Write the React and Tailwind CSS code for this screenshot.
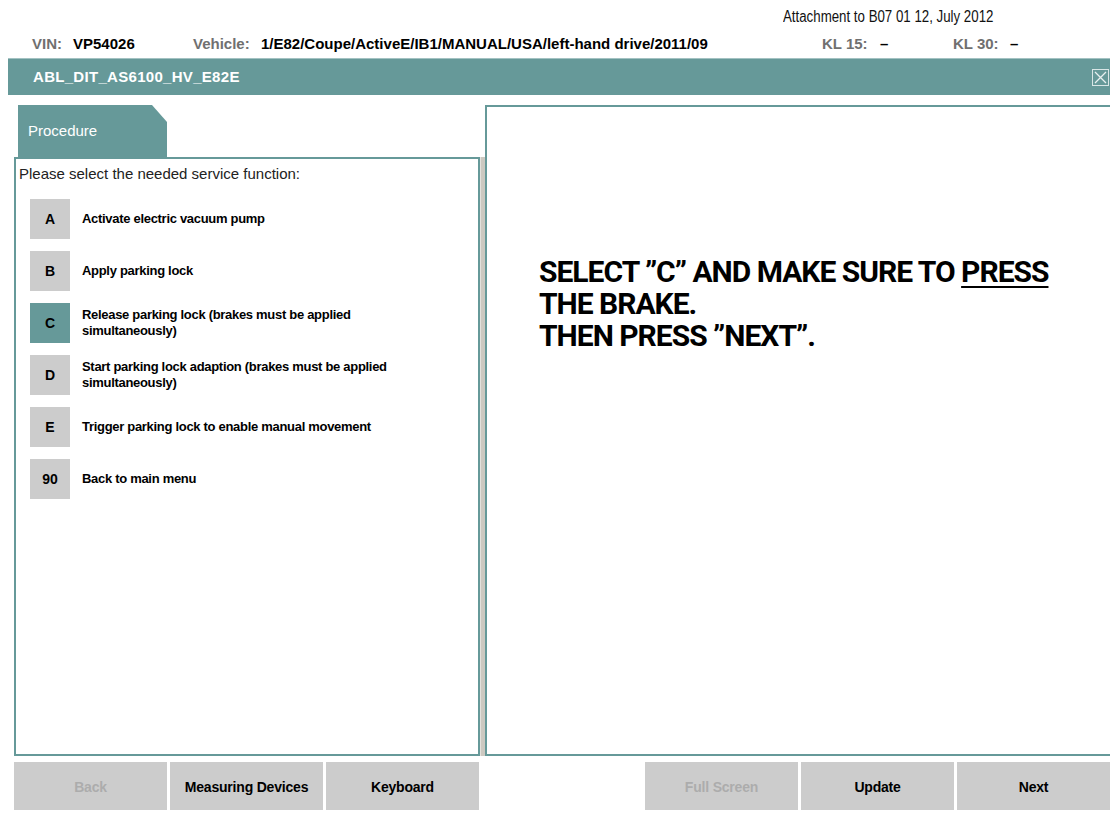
import React from 'react';

const items = [
    { key: 'A', label: 'Activate electric vacuum pump' },
    { key: 'B', label: 'Apply parking lock' },
    { key: 'C', label: 'Release parking lock (brakes must be applied simultaneously)', active: true },
    { key: 'D', label: 'Start parking lock adaption (brakes must be applied simultaneously)' },
    { key: 'E', label: 'Trigger parking lock to enable manual movement' },
    { key: '90', label: 'Back to main menu' },
];

const FooterButton = ({ children, disabled }) => (
    <button
        className={`h-[48px] w-[153px] pt-[3px] bg-[#cccccc] text-[14px] font-bold tracking-[-0.2px] ${disabled ? 'text-[#acacac]' : 'text-black'}`}
    >
        {children}
    </button>
);

const App = () => {
    return (
        <div className="w-[1119px] h-[820px] bg-white font-['Liberation_Sans',Arial,sans-serif] text-black overflow-hidden">
            {/* attachment note */}
            <div className="h-[30px] pl-[783px] pt-[5px]">
                <span className="inline-block origin-left scale-x-[0.83] whitespace-nowrap text-[16px] leading-[20px] text-[#111111]">
                    Attachment to B07 01 12, July 2012
                </span>
            </div>

            {/* vehicle info */}
            <div className="h-[28px] pl-[32px] flex items-center text-[15px] font-bold whitespace-nowrap">
                <span className="w-[41px] text-[#707070]">VIN:</span>
                <span className="w-[120px]">VP54026</span>
                <span className="w-[68px] text-[#707070]">Vehicle:</span>
                <span className="w-[561px]">1/E82/Coupe/ActiveE/IB1/MANUAL/USA/left-hand drive/2011/09</span>
                <span className="w-[58px] text-[#707070]">KL 15:</span>
                <span className="w-[73px]">–</span>
                <span className="w-[57px] text-[#707070]">KL 30:</span>
                <span>–</span>
            </div>

            {/* title bar */}
            <div className="ml-[8px] w-[1102px] h-[37px] bg-[#669999] border-t border-[#a3c2c2] flex items-center justify-between">
                <span className="ml-[25px] text-white text-[15px] font-bold tracking-[0.3px]">ABL_DIT_AS6100_HV_E82E</span>
                <svg width="17" height="17" viewBox="0 0 17 17" className="mr-[1px]">
                    <rect x="0.5" y="0.5" width="16" height="16" fill="none" stroke="#d9e6e6" strokeWidth="1" />
                    <path d="M3 3 L14 14 M14 3 L3 14" stroke="#e8f0f0" strokeWidth="1.3" />
                </svg>
            </div>

            {/* main area */}
            <div className="mt-[10px] ml-[14px] w-[1096px] flex h-[651px]">
                {/* left column */}
                <div className="w-[466px] flex flex-col">
                    <div className="ml-[4px] w-[149px] h-[52px] bg-[#669999] [clip-path:polygon(0_0,134px_0,149px_17px,149px_100%,0_100%)] flex items-center pl-[10px]">
                        <span className="text-white text-[15px]">Procedure</span>
                    </div>
                    <div className="flex-1 border-2 border-[#669999] pt-[6px] pl-[3px]">
                        <div className="text-[15px] leading-[18px] text-[#222222]">Please select the needed service function:</div>
                        <div className="mt-[16px] ml-[11px] flex flex-col gap-[12px]">
                            {items.map(item => (
                                <div key={item.key} className="flex items-center gap-[12px]">
                                    <div
                                        className={`w-[40px] h-[40px] shrink-0 flex items-center justify-center text-[14px] font-bold ${item.active ? 'bg-[#669999]' : 'bg-[#cccccc]'}`}
                                    >
                                        {item.key}
                                    </div>
                                    <div className="w-[330px] text-[13px] leading-[16px] font-bold tracking-[-0.3px]">{item.label}</div>
                                </div>
                            ))}
                        </div>
                    </div>
                </div>

                {/* splitter */}
                <div className="mt-[52px] w-[5px] bg-[#cdc9c1] border-l border-[#e4e1dc]"></div>

                {/* right panel */}
                <div className="flex-1 border-2 border-r-0 border-[#669999] pl-[52px] pt-[149px]">
                    <div className="text-[30px] leading-[32px] font-bold tracking-[-1px] font-['Roboto',sans-serif]">
                        SELECT ”C” AND MAKE SURE TO <span className="underline decoration-2 underline-offset-[4px]">PRESS</span>
                        <br />
                        THE BRAKE.
                        <br />
                        THEN PRESS ”NEXT”.
                    </div>
                </div>
            </div>

            {/* footer buttons */}
            <div className="mt-[6px] ml-[14px] w-[1096px] flex justify-between">
                <div className="flex gap-[3px]">
                    <FooterButton disabled>Back</FooterButton>
                    <FooterButton>Measuring Devices</FooterButton>
                    <FooterButton>Keyboard</FooterButton>
                </div>
                <div className="flex gap-[3px]">
                    <FooterButton disabled>Full Screen</FooterButton>
                    <FooterButton>Update</FooterButton>
                    <FooterButton>Next</FooterButton>
                </div>
            </div>
        </div>
    );
};

export default App;
